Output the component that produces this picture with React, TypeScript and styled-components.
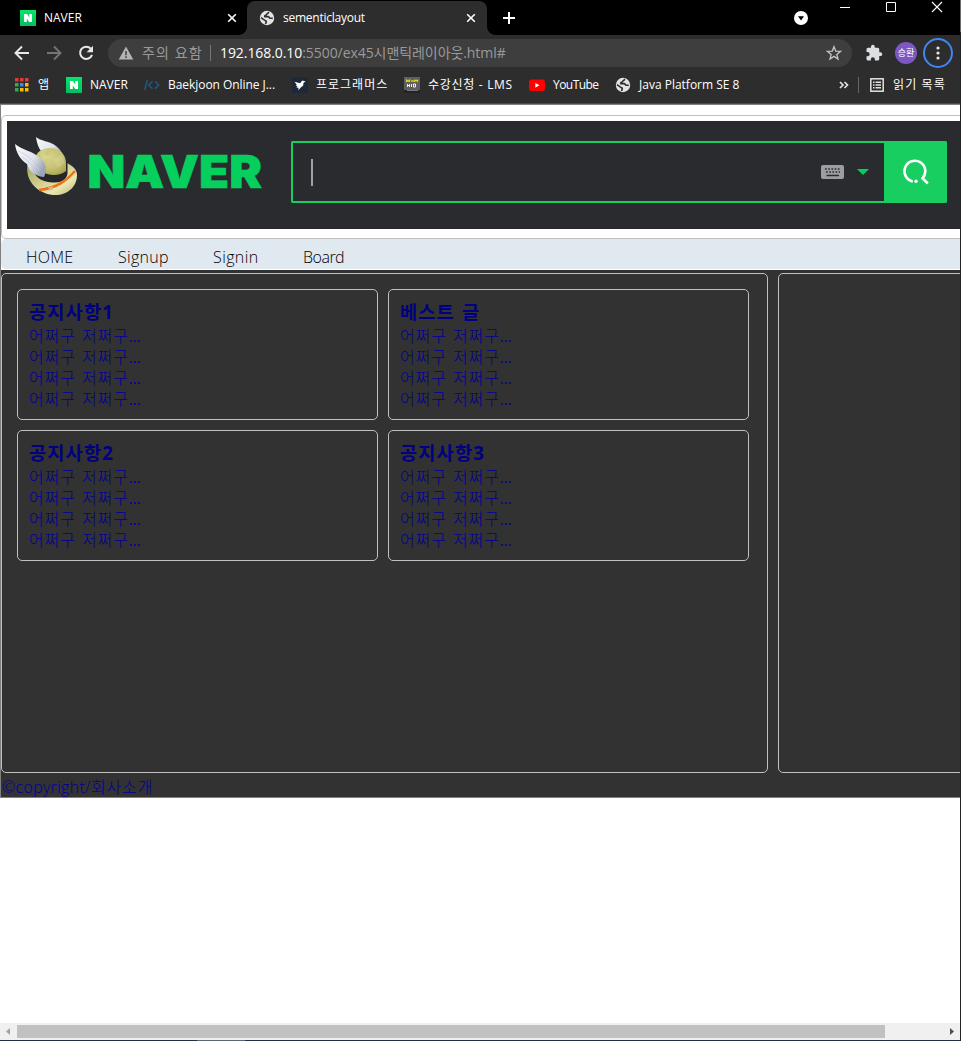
import React from "react";
import styled, { createGlobalStyle } from "styled-components";

const GlobalStyle = createGlobalStyle`
  * { box-sizing: border-box; }
  body { margin: 0; overflow: hidden; background: #fff; }
  h3, p { margin: 0; }
  svg { display: block; flex: none; }
`;

const ui = `"Open Sans", "Noto Sans CJK KR", sans-serif`;

const Frame = styled.div`
  display: flex;
  width: 961px;
  height: 1041px;
  overflow: hidden;
  font-family: ${ui};
`;
const Browser = styled.div`
  display: flex;
  flex-direction: column;
  width: 960px;
`;
const FrameEdge = styled.div`
  width: 1px;
  background: linear-gradient(#6b6b6b 32px, #242424 32px);
`;

/* Tab strip */
const TabStrip = styled.div`
  display: flex;
  height: 35px;
  background: #000;
`;
const Tab = styled.div<{ $active?: boolean }>`
  display: flex;
  align-items: center;
  height: ${(p) => (p.$active ? 34 : 35)}px;
  margin-top: ${(p) => (p.$active ? 1 : 0)}px;
  width: ${(p) => (p.$active ? 240 : 247)}px;
  padding: ${(p) => (p.$active ? "0 11px 1px 12px" : "0 10px 0 20px")};
  border-radius: 8px 8px 0 0;
  background: ${(p) => (p.$active ? "#2d2d2d" : "#000")};
`;
const TabCorner = styled.div<{ $side: "left" | "right" }>`
  align-self: flex-end;
  width: 8px;
  height: 8px;
  margin-left: ${(p) => (p.$side === "left" ? -8 : 0)}px;
  background: radial-gradient(
    circle at ${(p) => (p.$side === "left" ? "0 0" : "100% 0")},
    #000 7.5px,
    #2d2d2d 8px
  );
`;
const TabTitle = styled.span<{ $spacing?: number }>`
  flex: 1;
  margin-left: 8px;
  color: #fff;
  font-size: 12px;
  line-height: 16px;
  letter-spacing: ${(p) => p.$spacing ?? 0}px;
  white-space: nowrap;
`;
const NewTab = styled.div`
  display: flex;
  align-items: center;
  margin-left: 8px;
  flex: 1;
`;
const TabSearch = styled.div`
  display: flex;
  align-items: center;
  margin-right: 31px;
`;
const WindowButtons = styled.div`
  display: flex;
  gap: 35px;
  padding: 1px 17px 0 0;
`;

/* Toolbar */
const Toolbar = styled.div`
  display: flex;
  align-items: center;
  height: 36px;
  padding-left: 13px;
  background: #2d2d2d;
`;
const NavButtons = styled.div`
  display: flex;
  gap: 14px;
  width: 95px;
`;
const AddressBar = styled.div`
  display: flex;
  align-items: center;
  width: 744px;
  height: 28px;
  padding: 0 10px 0 10px;
  border-radius: 14px;
  background: #3e3e3e;
  color: #9a9a9a;
  font-size: 14px;
  line-height: 20px;
  white-space: nowrap;
`;
const Warning = styled.span`
  margin-left: 8px;
  width: 68px;
  letter-spacing: 1.1px;
`;
const AddressDivider = styled.span`
  width: 1px;
  height: 16px;
  margin-right: 9px;
  background: #777;
`;
const Url = styled.span`
  flex: 1;
  letter-spacing: -0.07px;
`;
const Host = styled.span`
  color: #fff;
`;
const Extensions = styled.div`
  margin-left: 13px;
`;
const Avatar = styled.div`
  display: flex;
  align-items: center;
  justify-content: center;
  width: 22px;
  height: 22px;
  margin: 0 6px 0 12px;
  border-radius: 50%;
  background: #7e57c2;
  color: #fff;
  font-size: 9px;
  line-height: 12px;
`;
const MenuButton = styled.div`
  display: flex;
  align-items: center;
  justify-content: center;
  width: 30px;
  height: 30px;
  border: 2px solid #4285f4;
  border-radius: 50%;
`;

/* Bookmarks */
const BookmarkBar = styled.div`
  display: flex;
  align-items: center;
  height: 34px;
  padding: 0 14px 6px 14px;
  background: #2d2d2d;
  border-bottom: 1px solid #808080;
  box-shadow: inset 0 -1px #4a4a4a;
`;
const Bookmark = styled.div<{ $width: number; $gap?: number; $spacing?: number }>`
  display: flex;
  align-items: center;
  gap: ${(p) => p.$gap ?? 8}px;
  width: ${(p) => p.$width}px;
  color: #fff;
  font-size: 12px;
  line-height: 16px;
  letter-spacing: ${(p) => p.$spacing ?? 0}px;
  white-space: nowrap;
`;
const BookmarkDivider = styled.span`
  width: 1px;
  height: 16px;
  margin: 0 11px 0 9px;
  background: #666;
`;

/* Web page */
const Page = styled.div`
  flex: 1;
  display: flex;
  flex-direction: column;
  overflow: hidden;
  background: #fff;
`;
const PageTop = styled.div`
  width: 960px;
  padding-top: 10px;
  border-left: 1px solid #808080;
  overflow: hidden;
`;
const Header = styled.header`
  width: 1100px;
  height: 124px;
  padding: 5px;
  border: 1px solid #c0c0c0;
  border-radius: 5px;
`;
const Banner = styled.div`
  display: flex;
  height: 108px;
  background: #2a2b2f;
`;
const SearchBox = styled.div`
  display: flex;
  align-items: center;
  width: 656px;
  height: 62px;
  margin-top: 20px;
  border: 2px solid #19ce60;
  border-right: 0;
  border-radius: 2px;
`;
const Caret = styled.span`
  width: 2px;
  height: 27px;
  margin: 0 auto 0 18px;
  background: #a0a1a5;
`;
const SearchButton = styled.div`
  display: flex;
  align-items: center;
  justify-content: center;
  width: 63px;
  height: 62px;
  margin-left: 15px;
  border-radius: 0 2px 2px 0;
  background: #19ce60;
`;
const Nav = styled.nav`
  display: flex;
  width: 1100px;
  height: 30px;
  margin-bottom: 1px;
  padding: 7px 0 0 25px;
  border-radius: 5px;
  background: #e0e8f0;
`;
const NavLink = styled.a<{ $width: number; $spacing?: number }>`
  width: ${(p) => p.$width}px;
  color: #000;
  font-size: 16px;
  font-weight: 300;
  line-height: 22px;
  letter-spacing: ${(p) => p.$spacing ?? 0}px;
`;
const Content = styled.div`
  height: 528px;
  padding-top: 3px;
  border-left: 1px solid #808080;
  border-bottom: 1px solid #808080;
  background: #323232;
  overflow: hidden;
  color: #000080;
`;
const Columns = styled.div`
  display: flex;
  gap: 10px;
`;
const Section = styled.section`
  display: grid;
  flex: none;
  grid-template-columns: 361px 361px;
  grid-auto-rows: 131px;
  gap: 10px;
  width: 767px;
  height: 500px;
  padding: 15px;
  border: 1px solid #c0c0c0;
  border-radius: 5px;
`;
const Aside = styled.aside`
  flex: none;
  width: 320px;
  height: 500px;
  border: 1px solid #c0c0c0;
  border-radius: 5px;
`;
const Card = styled.article`
  padding: 9px 11px;
  border: 1px solid #c0c0c0;
  border-radius: 5px;
`;
const CardTitle = styled.h3`
  margin-bottom: 2px;
  font-size: 18.72px;
  line-height: 25px;
  font-weight: 700;
  letter-spacing: 1.1px;
  word-spacing: 1px;
`;
const CardLine = styled.p`
  color: #000094;
  font-size: 16px;
  line-height: 21px;
  font-weight: 300;
  letter-spacing: 0.9px;
  word-spacing: 1px;
`;
const Dots = styled.span`
  font-weight: 400;
  letter-spacing: -0.2px;
`;
const Footer = styled.footer`
  padding-left: 1px;
  color: #000094;
  font-size: 16px;
  font-weight: 300;
  line-height: 28px;
  letter-spacing: 0.3px;
`;
const FooterLink = styled.span`
  letter-spacing: 0.9px;
`;

const ScrollBar = styled.div`
  display: flex;
  align-items: center;
  height: 17px;
  padding: 0 6px 0 6px;
  background: #f0f0f0;
`;
const Thumb = styled.div`
  width: 868px;
  height: 13px;
  margin: 0 auto 0 7px;
  background: #c1c1c1;
`;
const Taskbar = styled.div`
  height: 1px;
  background: linear-gradient(90deg, #203040 197px, #5a6875 197px, #5a6875 245px, #203040 245px);
`;

const NaverIcon = () => (
  <svg width="16" height="16" viewBox="0 0 16 16">
    <defs>
      <linearGradient id="ng" x1="0" y1="0" x2="0" y2="1">
        <stop stopColor="#05e667" />
        <stop offset="1" stopColor="#04bd60" />
      </linearGradient>
    </defs>
    <path fill="url(#ng)" d="M0 0h16v16H0z" />
    <path fill="#fff" d="M4 4h3l2.300 3.600V4H12v8H9.200L6.800 8.400V12H4z" />
  </svg>
);

const GlobeIcon = () => (
  <svg width="16" height="16" viewBox="0 0 16 16">
    <circle cx="8" cy="8" r="7.200" fill="#e2e3e5" />
    <path
      d="M9.500 1.800c.4 1.300-.5 1.700-1.300 2-.9.300-.5 1.300-1.400 1.500-.9.200-1.300.4-1 1.300h3.400c1 0 .9 1.700 1.900 1.700h2.700M2 7.600l3.600 2.600c.5.800 1.700.5 1.700 1.300 0 .9-.6.900-.6 2.500"
      fill="none"
      stroke="#2d2d2d"
      strokeWidth="1.600"
    />
  </svg>
);

const CloseIcon = () => (
  <svg width="10" height="10" viewBox="0 0 10 10">
    <path d="M1.200 1.200l7.600 7.600M8.800 1.200L1.200 8.800" stroke="#fff" strokeWidth="1.600" />
  </svg>
);

const ArrowIcon = ({ forward }: { forward?: boolean }) => (
  <svg width="18" height="18" viewBox="0 0 18 18">
    <path
      d={forward ? "M2 9h13M9 2.500L15.500 9 9 15.500" : "M16 9H3M9 2.500L2.500 9 9 15.500"}
      fill="none"
      stroke={forward ? "#757575" : "#e8e8e8"}
      strokeWidth="1.900"
    />
  </svg>
);

const ReloadIcon = () => (
  <svg width="18" height="18" viewBox="0 0 18 18">
    <path d="M13.800 4.700A6.100 6.100 0 1 0 15 10.800" fill="none" stroke="#e8e8e8" strokeWidth="2" />
    <path d="M16 1.800v6.400H9.600z" fill="#e8e8e8" />
  </svg>
);

const WarningIcon = () => (
  <svg width="16" height="16" viewBox="0 0 16 16">
    <path d="M8 1.500L15.300 14.500H.7z" fill="#b4b5b8" />
    <path d="M8 6v4.300M8 11.300v1.600" stroke="#3e3e3e" strokeWidth="1.500" />
  </svg>
);

const StarIcon = () => (
  <svg width="16" height="16" viewBox="0 0 16 16">
    <path
      d="M8 1.700l1.700 4.400 4.700.3-3.600 3 1.200 4.600L8 11.400 4 14l1.200-4.600-3.600-3 4.700-.3z"
      fill="none"
      stroke="#c4c5c8"
      strokeWidth="1.300"
    />
  </svg>
);

const PuzzleIcon = () => (
  <svg width="18" height="18" viewBox="0 0 24 24">
    <path
      fill="#dedfe1"
      d="M20.500 11H19V7a2 2 0 0 0-2-2h-4V3.500a2.500 2.500 0 0 0-5 0V5H4a2 2 0 0 0-2 2v3.800h1.500a2.700 2.700 0 0 1 0 5.400H2V20c0 1.100.9 2 2 2h3.800v-1.500a2.700 2.700 0 0 1 5.400 0V22H17a2 2 0 0 0 2-2v-4h1.500a2.500 2.500 0 0 0 0-5z"
    />
  </svg>
);

const AppsIcon = () => {
  const colors = ["#e53935", "#e53935", "#e53935", "#34a853", "#4285f4", "#fbbc05", "#34a853", "#fbbc05", "#fbbc05"];
  return (
    <svg width="15" height="15" viewBox="0 0 15 15">
      {colors.map((c, i) => (
        <rect key={i} x={1 + (i % 3) * 5} y={1 + Math.floor(i / 3) * 5} width="3.500" height="3.500" fill={c} />
      ))}
    </svg>
  );
};

const CodeIcon = () => (
  <svg width="16" height="16" viewBox="0 0 16 16">
    <path d="M3.300 3L.8 13M8.500 4.200L4.700 8l3.800 3.800M11 4.200L14.800 8 11 11.800" fill="none" stroke="#1b5c87" strokeWidth="1.400" />
  </svg>
);

const BirdIcon = () => (
  <svg width="16" height="16" viewBox="0 0 16 16">
    <rect width="16" height="16" rx="1" fill="#1d2839" />
    <path fill="#fff" d="M2.500 4.800l5.500 1.400 2.400-2.700 1.500.6 1.800.5-2.200 1.200-.4 3-2.400 1.600-2.300 2.900.1-2.500-2.200-.4 1.200-.9-1.900-1 1.300-.5z" />
  </svg>
);

const LmsIcon = () => (
  <svg width="16" height="16" viewBox="0 0 16 16">
    <rect width="16" height="13" fill="#5f5f5f" />
    <rect width="16" height="3" y="13" fill="#242424" />
    <path d="M2.500 5V3l1.500 1.200L5.500 3v2M7 4h2.500M10.500 5V3.500h3V5" fill="none" stroke="#d8d61a" strokeWidth="1.300" />
    <path d="M3.500 7v3m0-1.500h2M5.500 7v3M7.500 7v3M9.500 7h2v3h-2z" fill="none" stroke="#eee" strokeWidth="1" />
    <path d="M3 13.500h11" stroke="#777" />
  </svg>
);

const YoutubeIcon = () => (
  <svg width="16" height="16" viewBox="0 0 16 16">
    <rect y="2.500" width="16" height="11.500" rx="2.800" fill="#f00" />
    <path d="M6.300 5.900v4.800l4.200-2.400z" fill="#fff" />
  </svg>
);

const ListIcon = () => (
  <svg width="14" height="14" viewBox="0 0 14 14">
    <rect x=".8" y=".8" width="12.400" height="12.400" fill="none" stroke="#e2e2e2" strokeWidth="1.500" />
    <path d="M3 4.300h1.500M5.500 4.300H11M3 7h1.500M5.500 7H11M3 9.700h1.500M5.500 9.700H11" stroke="#e2e2e2" strokeWidth="1.500" />
  </svg>
);

const NaverLogo = () => (
  <svg width="284" height="108" viewBox="7 121 284 108">
    <defs>
      <radialGradient id="crown" cx=".45" cy=".35" r=".7">
        <stop stopColor="#d6d38c" />
        <stop offset=".6" stopColor="#c5c274" />
        <stop offset="1" stopColor="#a9a850" />
      </radialGradient>
      <linearGradient id="brim" x1="0" y1="0" x2="1" y2="1">
        <stop stopColor="#a3a259" />
        <stop offset=".7" stopColor="#ebe7b0" />
        <stop offset="1" stopColor="#b8b574" />
      </linearGradient>
      <linearGradient id="wing" x1="0" y1="0" x2="1" y2=".6">
        <stop stopColor="#fafbfe" />
        <stop offset=".65" stopColor="#dde1ec" />
        <stop offset="1" stopColor="#9ca5b8" />
      </linearGradient>
    </defs>
    <path d="M36 137c4 4 14 4 20 9 5 4 7 8 8 13l-18-3c-6-4-9-11-10-19z" fill="url(#wing)" />
    <path d="M28 163c-4 15 7 30 25 32 14 1 24-8 24-20 0-5-4-9-10-12z" fill="url(#brim)" />
    <path d="M32 164c1 14 10 18.500 23 18.500 7 0 11-3 12.500-8.500v-11z" fill="#25262a" />
    <path d="M35 160c0-8 8-12 15-12 10 0 16 7 16 15v8c-6 5-17 5-23 1z" fill="url(#crown)" />
    <path d="M38 152l7-3 4 8-6 4zM53 159l9-4 3 8-7 5z" fill="#efedaf" opacity=".2" />
    <circle cx="47" cy="153.500" r="2" fill="#c9c77a" />
    <path d="M39 190c18-2 27-9 36-19" fill="none" stroke="#ed721c" strokeWidth="2.600" />
    <path d="M48 186.500l4 3.500m-3 .5l3.500-4" stroke="#c9c0aa" strokeWidth="1.500" />
    <path d="M15 144c7 6 18 7 25 14 7 6 7 12 4 19-10-1-15-6-17-13-7-4-11-12-12-20z" fill="url(#wing)" />
    <path d="M18 151c9 4 17 9 21 20M22 157c6 3 11 8 14 16" fill="none" stroke="#c3c9d6" strokeWidth=".7" />
    <text
      x="87.500"
      y="188.300"
      fill="#06cf5e"
      stroke="#06cf5e"
      strokeWidth=".6"
      fontFamily="Inter, sans-serif"
      fontWeight="900"
      fontSize="45"
      textLength="174.500"
      lengthAdjust="spacingAndGlyphs"
    >
      NAVER
    </text>
  </svg>
);

const KeyboardIcon = () => (
  <svg width="23" height="14" viewBox="0 0 23 14">
    <rect width="23" height="14" rx="2" fill="#9b9da3" />
    <path d="M4 4h16M5 7h14" stroke="#2a2b2f" strokeWidth="1.500" strokeDasharray="1.700 1.500" />
    <path d="M5.500 10.500h12.500" stroke="#2a2b2f" strokeWidth="1.500" />
  </svg>
);

const SearchIcon = () => (
  <svg width="28" height="28" viewBox="0 0 28 28">
    <path d="M10.800 23.400A10.400 10.400 0 1 1 20.500 20.300L25.800 25.500M19.700 19.500l2 2" fill="none" stroke="#fff" strokeWidth="2.600" />
    <circle cx="14" cy="23.200" r="1.700" fill="#fff" />
  </svg>
);

const cards = ["공지사항1", "베스트 글", "공지사항2", "공지사항3"];

export default function App() {
  return (
    <Frame>
      <GlobalStyle />
      <Browser>
        <TabStrip>
          <Tab>
            <NaverIcon />
            <TabTitle>NAVER</TabTitle>
            <CloseIcon />
          </Tab>
          <TabCorner $side="left" />
          <Tab $active>
            <GlobeIcon />
            <TabTitle $spacing={-0.25}>sementiclayout</TabTitle>
            <CloseIcon />
          </Tab>
          <TabCorner $side="right" />
          <NewTab>
            <svg width="12" height="12" viewBox="0 0 12 12">
              <path d="M6 0v12M0 6h12" stroke="#fff" strokeWidth="2" />
            </svg>
          </NewTab>
          <TabSearch>
            <svg width="14" height="14" viewBox="0 0 14 14">
              <circle cx="7" cy="7" r="7" fill="#fff" />
              <path d="M4 5.200h6L7 9.400z" fill="#000" />
            </svg>
          </TabSearch>
          <WindowButtons>
            <svg width="11" height="12" viewBox="0 0 11 12">
              <path d="M1 6.500h10" stroke="#fff" />
            </svg>
            <svg width="11" height="12" viewBox="0 0 11 12">
              <path d="M1.500 1.500h9v9h-9z" fill="none" stroke="#fff" />
            </svg>
            <svg width="12" height="12" viewBox="0 0 12 12">
              <path d="M1 1l10 10M11 1L1 11" stroke="#fff" strokeWidth="1.100" />
            </svg>
          </WindowButtons>
        </TabStrip>

        <Toolbar>
          <NavButtons>
            <ArrowIcon />
            <ArrowIcon forward />
            <ReloadIcon />
          </NavButtons>
          <AddressBar>
            <WarningIcon />
            <Warning>주의 요함</Warning>
            <AddressDivider />
            <Url>
              <Host>192.168.0.10</Host>:5500/ex45시맨틱레이아웃.html#
            </Url>
            <StarIcon />
          </AddressBar>
          <Extensions>
            <PuzzleIcon />
          </Extensions>
          <Avatar>승환</Avatar>
          <MenuButton>
            <svg width="4" height="14" viewBox="0 0 4 14">
              <circle cx="2" cy="2" r="1.600" fill="#e8e8e8" />
              <circle cx="2" cy="7" r="1.600" fill="#e8e8e8" />
              <circle cx="2" cy="12" r="1.600" fill="#e8e8e8" />
            </svg>
          </MenuButton>
        </Toolbar>

        <BookmarkBar>
          <Bookmark $width={52} $gap={9}><AppsIcon />앱</Bookmark>
          <Bookmark $width={78}><NaverIcon />NAVER</Bookmark>
          <Bookmark $width={148} $spacing={-0.05}><CodeIcon />Baekjoon Online J...</Bookmark>
          <Bookmark $width={112} $spacing={1}><BirdIcon />프로그래머스</Bookmark>
          <Bookmark $width={125} $spacing={0.7}><LmsIcon />수강신청 - LMS</Bookmark>
          <Bookmark $width={86} $spacing={-0.55}><YoutubeIcon />YouTube</Bookmark>
          <Bookmark $width={224}><GlobeIcon />Java Platform SE 8</Bookmark>
          <svg width="10" height="8" viewBox="0 0 10 8">
            <path d="M1 1l3 3-3 3M5.500 1l3 3-3 3" fill="none" stroke="#e2e2e2" strokeWidth="1.700" />
          </svg>
          <BookmarkDivider />
          <Bookmark $width={76} $gap={9} $spacing={1.1}><ListIcon />읽기 목록</Bookmark>
        </BookmarkBar>

        <Page>
          <PageTop>
            <Header>
              <Banner>
                <NaverLogo />
                <SearchBox>
                  <Caret />
                  <KeyboardIcon />
                  <svg width="25" height="6" viewBox="0 0 25 6">
                    <path d="M13 0h12l-6 6z" fill="#06cf5e" />
                  </svg>
                  <SearchButton><SearchIcon /></SearchButton>
                </SearchBox>
              </Banner>
            </Header>
            <Nav>
              <NavLink $width={92} $spacing={0.2}>HOME</NavLink>
              <NavLink $width={95} $spacing={0.3}>Signup</NavLink>
              <NavLink $width={90} $spacing={0.4}>Signin</NavLink>
              <NavLink $width={90} $spacing={-0.5}>Board</NavLink>
            </Nav>
          </PageTop>
          <Content>
            <Columns>
              <Section>
                {cards.map((title) => (
                  <Card key={title}>
                    <CardTitle>{title}</CardTitle>
                    {[0, 1, 2, 3].map((n) => (
                      <CardLine key={n}>어쩌구 저쩌구<Dots>...</Dots></CardLine>
                    ))}
                  </Card>
                ))}
              </Section>
              <Aside />
            </Columns>
            <Footer>©copyright/<FooterLink>회사소개</FooterLink></Footer>
          </Content>
        </Page>

        <ScrollBar>
          <svg width="4" height="7" viewBox="0 0 4 7"><path d="M4 0v7L0 3.500z" fill="#a3a3a3" /></svg>
          <Thumb />
          <svg width="4" height="7" viewBox="0 0 4 7"><path d="M0 0v7l4-3.500z" fill="#505050" /></svg>
        </ScrollBar>
        <Taskbar />
      </Browser>
      <FrameEdge />
    </Frame>
  );
}
